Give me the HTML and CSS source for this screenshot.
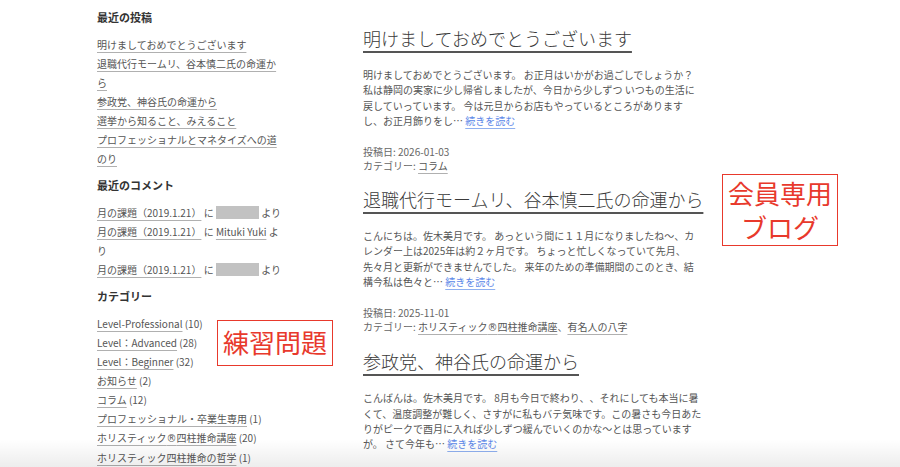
FILE: index.html
```html
<!DOCTYPE html>
<html lang="ja">
<head>
<meta charset="utf-8">
<title>ブログ</title>
<link rel="stylesheet" href="styles.css">
</head>
<body>
<div class="page">
  <aside class="sidebar">
    <section class="widget">
      <h2 class="widget-title">最近の投稿</h2>
      <ul class="list">
        <li><a href="#">明けましておめでとうございます</a></li>
        <li><a href="#">退職代行モームリ、谷本慎二氏の命運から</a></li>
        <li><a href="#">参政党、神谷氏の命運から</a></li>
        <li><a href="#">選挙から知ること、みえること</a></li>
        <li><a href="#">プロフェッショナルとマネタイズへの道のり</a></li>
      </ul>
    </section>
    <section class="widget">
      <h2 class="widget-title">最近のコメント</h2>
      <ul class="list">
        <li><a href="#">月の課題（2019.1.21）</a> に <span class="redact"></span> より</li>
        <li><a href="#">月の課題（2019.1.21）</a> に <a href="#">Mituki Yuki</a> より</li>
        <li><a href="#">月の課題（2019.1.21）</a> に <span class="redact"></span> より</li>
      </ul>
    </section>
    <section class="widget">
      <h2 class="widget-title">カテゴリー</h2>
      <ul class="list">
        <li><a href="#">Level-Professional</a> (10)</li>
        <li><a href="#">Level：Advanced</a> (28)</li>
        <li><a href="#">Level：Beginner</a> (32)</li>
        <li><a href="#">お知らせ</a> (2)</li>
        <li><a href="#">コラム</a> (12)</li>
        <li><a href="#">プロフェッショナル・卒業生専用</a> (1)</li>
        <li><a href="#">ホリスティック<span class="reg">®</span>四柱推命講座</a> (20)</li>
        <li><a href="#">ホリスティック四柱推命の哲学</a> (1)</li>
      </ul>
    </section>
  </aside>

  <main class="main">
    <article class="post">
      <h1 class="post-title"><a href="#">明けましておめでとうございます</a></h1>
      <p class="excerpt">明けましておめでとうございます。 お正月はいかがお過ごしでしょうか？ 私は静岡の実家に少し帰省しましたが、今日から少しずつ いつもの生活に戻していっています。 今は元旦からお店もやっているところがあります<br>し、お正月飾りをし… <a class="more" href="#">続きを読む</a></p>
      <div class="meta">
        <div>投稿日: 2026-01-03</div>
        <div>カテゴリー: <a href="#">コラム</a></div>
      </div>
    </article>
    <article class="post">
      <h1 class="post-title"><a href="#">退職代行モームリ、谷本慎二氏の命運から</a></h1>
      <p class="excerpt">こんにちは。佐木美月です。 あっという間に１１月になりましたね〜、カレンダー上は2025年は約２ヶ月です。 ちょっと忙しくなっていて先月、先々月と更新ができませんでした。 来年のための準備期間のこのとき、結構今私は色々と… <a class="more" href="#">続きを読む</a></p>
      <div class="meta">
        <div>投稿日: 2025-11-01</div>
        <div>カテゴリー: <a href="#">ホリスティック<span class="reg">®</span>四柱推命講座</a>、<a href="#">有名人の八字</a></div>
      </div>
    </article>
    <article class="post">
      <h1 class="post-title"><a href="#">参政党、神谷氏の命運から</a></h1>
      <p class="excerpt">こんばんは。佐木美月です。 8月も今日で終わり、、それにしても本当に暑くて、温度調整が難しく、さすがに私もバテ気味です。この暑さも今日あたりがピークで酉月に入れば少しずつ緩んでいくのかな〜とは思っていますが。 さて今年も… <a class="more" href="#">続きを読む</a></p>
    </article>
  </main>
</div>

<div class="stamp stamp-blog">会員専用<br>ブログ</div>
<div class="stamp stamp-practice">練習問題</div>
<div class="fade"></div>
</body>
</html>
```

FILE: styles.css
```css
* { box-sizing: border-box; }

html, body {
  margin: 0;
  padding: 0;
  background: #fff;
}

body {
  font-family: "Noto Sans CJK JP", "Noto Sans", sans-serif;
  color: #555;
  font-size: 10px;
  position: relative;
  height: 467px;
  overflow: hidden;
  text-spacing-trim: space-all;
}

a {
  color: #555;
  text-decoration: underline;
  text-decoration-color: #b0b0b0;
  text-decoration-thickness: 1px;
  text-underline-offset: 3px;
}

.reg {
  font-family: "DejaVu Sans", sans-serif;
  font-size: 10px;
}

.page {
  display: flex;
  gap: 81px;
  padding-left: 97px;
}

/* Sidebar */
.sidebar {
  width: 185px;
  flex: none;
  padding-top: 8px;
}

.widget { margin-bottom: 8px; }

.widget-title {
  margin: 0 0 8px;
  font-size: 11px;
  line-height: 19px;
  font-weight: 700;
  color: #333;
}

.list {
  list-style: none;
  margin: 0;
  padding: 0;
}

.list li {
  font-size: 10px;
  line-height: 19px;
}

.redact {
  display: inline-block;
  width: 43px;
  height: 13px;
  background: #c2c2c2;
  vertical-align: -2px;
}

/* Main */
.main {
  width: 350px;
  flex: none;
  padding-top: 25px;
}

.post { margin-bottom: 14px; }

.post-title {
  margin: 0;
  font-family: "Noto Sans CJK JP Light", "Noto Sans CJK JP DemiLight", "Noto Sans CJK JP", sans-serif;
  font-size: 18px;
  font-weight: 300;
  line-height: 26px;
  white-space: nowrap;
}

.post-title a {
  color: #3a3a3a;
  text-decoration-color: #555;
  text-decoration-thickness: 2px;
  text-underline-offset: 5px;
}

.excerpt {
  width: 340px;
  margin: 16px 0 0;
  font-size: 10px;
  line-height: 15.3px;
  color: #555;
}

a.more {
  color: #5b87e8;
  text-decoration-color: #8fb0f0;
}

.meta {
  margin-top: 17px;
  font-size: 10px;
  line-height: 13.5px;
  color: #666;
}

/* Red annotation stamps */
.stamp {
  position: absolute;
  border: 1.5px solid #e8392c;
  color: #e8392c;
  font-size: 26px;
  font-weight: 400;
  text-align: center;
  background: #fff;
}

.stamp-blog {
  left: 722px;
  top: 174px;
  width: 116px;
  height: 72px;
  line-height: 34px;
  padding-top: 1px;
}

.stamp-practice {
  left: 217px;
  top: 320px;
  width: 116px;
  height: 46px;
  line-height: 42px;
}

.fade {
  position: absolute;
  left: 0;
  right: 0;
  bottom: 0;
  height: 28px;
  background: linear-gradient(to bottom, rgba(0,0,0,0), rgba(0,0,0,0.07));
  pointer-events: none;
}
```
